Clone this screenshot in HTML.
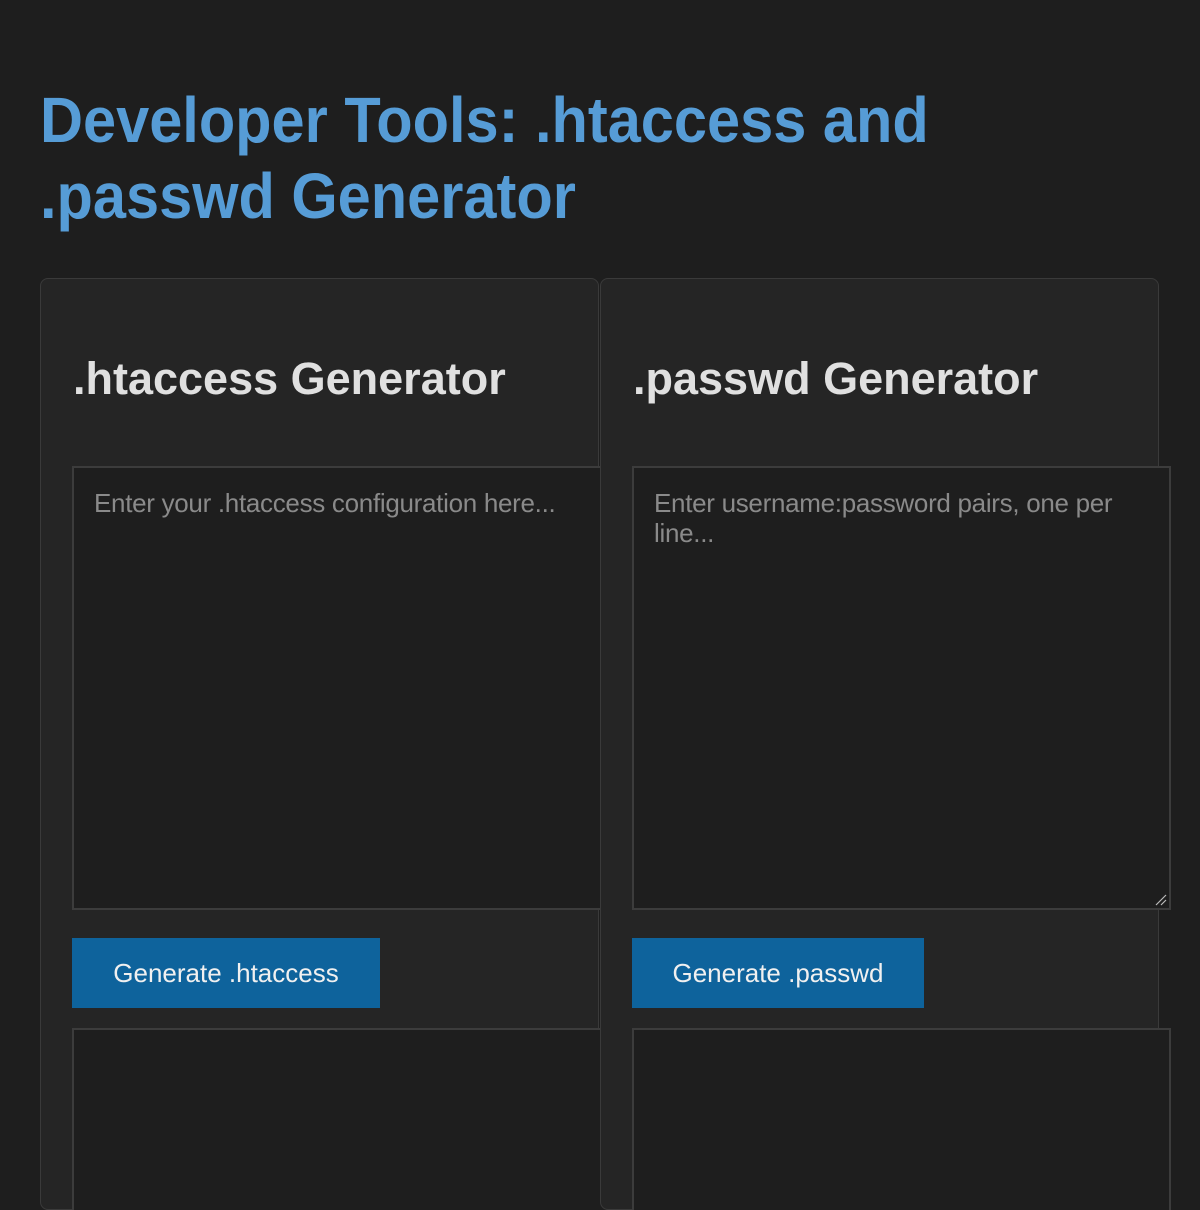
<!DOCTYPE html>
<html><head><meta charset="utf-8"><style>
html,body{margin:0;padding:0;background:#1e1e1e;width:1200px;height:1200px;overflow:hidden;font-family:"Liberation Sans",sans-serif}
h1{position:absolute;left:40px;top:82px;margin:0;font-size:64px;line-height:76px;color:#569cd6;font-weight:bold;white-space:nowrap;transform:scaleX(0.93);transform-origin:0 0}
.card{position:absolute;top:278px;width:557px;height:930px;background:#252525;border:1px solid #3a3a3a;border-radius:8px;overflow:visible}
h2{position:absolute;left:32px;top:72px;margin:0;font-size:45px;line-height:56px;color:#e0e0e0;font-weight:bold;white-space:nowrap;transform:scaleX(1.0);transform-origin:0 0}
.ta{position:absolute;left:31px;top:187px;width:535px;height:440px;background:#1e1e1e;border:2px solid #3c3c3c}
.ta span{position:absolute;left:20px;top:20px;right:20px;font-size:26px;line-height:30px;color:#8a8a8a;letter-spacing:-0.3px}
.btn{position:absolute;left:31px;top:659px;width:308px;height:70px;background:#0e639c;color:#f0f0f0;font-size:26px;line-height:70px;text-align:center}
.out{position:absolute;left:31px;top:749px;width:535px;height:180px;background:#1e1e1e;border:2px solid #3c3c3c;border-bottom:none}
.grip{position:absolute;right:2px;bottom:2px;width:12px;height:12px}
</style></head><body>
<h1>Developer Tools: .htaccess and<br>.passwd Generator</h1>
<div class="card" style="left:40px">
<h2>.htaccess Generator</h2>
<div class="ta"><span>Enter your .htaccess configuration here...</span></div>
<div class="btn">Generate .htaccess</div>
<div class="out"></div>
</div>
<div class="card" style="left:600px">
<h2>.passwd Generator</h2>
<div class="ta"><span>Enter username:password pairs, one per line...</span>
<svg class="grip" viewBox="0 0 12 12"><path d="M1 11L11 1M6 11L11 6" stroke="#bbb" stroke-width="1.2"/></svg></div>
<div class="btn" style="width:292px">Generate .passwd</div>
<div class="out"></div>
</div>
</body></html>
